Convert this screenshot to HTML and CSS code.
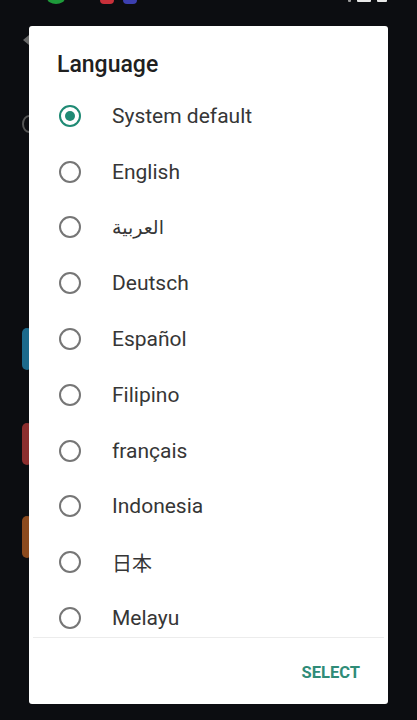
FILE: index.html
```html
<!DOCTYPE html>
<html>
<head>
<meta charset="utf-8">
<link rel="stylesheet" href="styles.css">
</head>
<body>
<div class="screen">
  <div class="statusbar">
    <span class="st st-green"></span>
    <span class="st st-red"></span>
    <span class="st st-blue"></span>
    <span class="st-right"><span class="sr a"></span><span class="sr b"></span><span class="sr c"></span></span>
  </div>
  <div class="bg-tab tab-blue"></div>
  <div class="bg-tab tab-red"></div>
  <div class="bg-tab tab-orange"></div>
  <div class="bg-arrow"></div>
  <div class="bg-ring"></div>

  <div class="dialog">
    <h1 class="title">Language</h1>
    <ul class="list">
      <li class="item checked"><span class="radio"></span><span class="label">System default</span></li>
      <li class="item"><span class="radio"></span><span class="label">English</span></li>
      <li class="item"><span class="radio"></span><span class="label ar" lang="ar">العربية</span></li>
      <li class="item"><span class="radio"></span><span class="label">Deutsch</span></li>
      <li class="item"><span class="radio"></span><span class="label">Español</span></li>
      <li class="item"><span class="radio"></span><span class="label">Filipino</span></li>
      <li class="item"><span class="radio"></span><span class="label">français</span></li>
      <li class="item"><span class="radio"></span><span class="label">Indonesia</span></li>
      <li class="item"><span class="radio"></span><span class="label ja" lang="ja">日本</span></li>
      <li class="item"><span class="radio"></span><span class="label">Melayu</span></li>
    </ul>
    <div class="actions">
      <button class="btn">SELECT</button>
    </div>
  </div>
</div>
</body>
</html>
```
FILE: styles.css
```css
html, body {
  margin: 0;
  padding: 0;
  background: #0c0d11;
}
.screen {
  position: relative;
  width: 417px;
  height: 720px;
  overflow: hidden;
  background: #0c0d11;
  font-family: Roboto, "Noto Sans", sans-serif;
  padding-top: 26px;
  box-sizing: border-box;
}
.statusbar {
  position: absolute;
  top: 0;
  left: 0;
  right: 0;
  height: 6px;
}
.st {
  position: absolute;
  top: -8px;
  width: 14px;
  height: 12px;
  border-radius: 4px;
}
.st-green { left: 47px; background: #1e9a3a; border-radius: 50%; width: 18px; }
.st-red { left: 100px; background: #c8303a; }
.st-blue { left: 123px; background: #3c3fb0; }
.st-right { position: absolute; right: 30px; top: -4px; display: flex; gap: 6px; }
.sr { display: block; height: 6px; background: #e8e8e8; border-radius: 1px; }
.sr.a { width: 3px; background: #9a9a9a; }
.sr.b { width: 14px; }
.sr.c { width: 10px; }

.bg-tab {
  position: absolute;
  left: 22px;
  width: 10px;
  height: 42px;
  border-radius: 5px;
}
.tab-blue { top: 328px; background: #1c6a8c; }
.tab-red { top: 423px; background: #8c2e2e; }
.tab-orange { top: 516px; background: #8c4a1e; }
.bg-arrow {
  position: absolute;
  left: 23px;
  top: 35px;
  width: 0;
  height: 0;
  border-top: 5px solid transparent;
  border-bottom: 5px solid transparent;
  border-right: 6px solid #6a6a6a;
}
.bg-ring {
  position: absolute;
  left: 22px;
  top: 115px;
  width: 10px;
  height: 14px;
  border: 2px solid #555;
  border-radius: 50%;
}

.dialog {
  position: relative;
  margin-left: 29px;
  width: 359px;
  height: 678px;
  background: #ffffff;
  border-radius: 3px;
  display: flex;
  flex-direction: column;
  overflow: hidden;
}
.title {
  margin: 0;
  padding: 25px 0 0 28px;
  height: 28px;
  font-size: 23px;
  line-height: 28px;
  font-weight: 500;
  color: #202020;
}
.list {
  list-style: none;
  margin: 0;
  padding: 9px 0 0 0;
  flex: 1;
  min-height: 0;
  overflow: hidden;
}
.item {
  display: flex;
  align-items: center;
  height: 55.8px;
}
.radio {
  box-sizing: border-box;
  width: 22px;
  height: 22px;
  margin-left: 30px;
  border: 2px solid #767676;
  border-radius: 50%;
  display: flex;
  align-items: center;
  justify-content: center;
  flex: none;
}
.checked .radio {
  border-color: #1f8a74;
}
.checked .radio::after {
  content: "";
  width: 10px;
  height: 10px;
  border-radius: 50%;
  background: #1f8a74;
}
.label {
  margin-left: 31px;
  font-size: 21px;
  color: #363636;
}
.label.ar { font-family: "Noto Sans", "DejaVu Sans", sans-serif; font-size: 19px; }
.label.ja { font-family: "Noto Sans CJK JP", sans-serif; font-size: 20px; }
.actions {
  border-top: 1px solid #ececec;
  margin: 0 4px;
  height: 66px;
  flex: none;
  display: flex;
  justify-content: flex-end;
  align-items: center;
}
.btn {
  border: none;
  background: none;
  font-family: Roboto, sans-serif;
  font-weight: 700;
  font-size: 16.5px;
  color: #2f8c78;
  padding: 0;
  margin-right: 24px;
  margin-top: 2px;
}
```
